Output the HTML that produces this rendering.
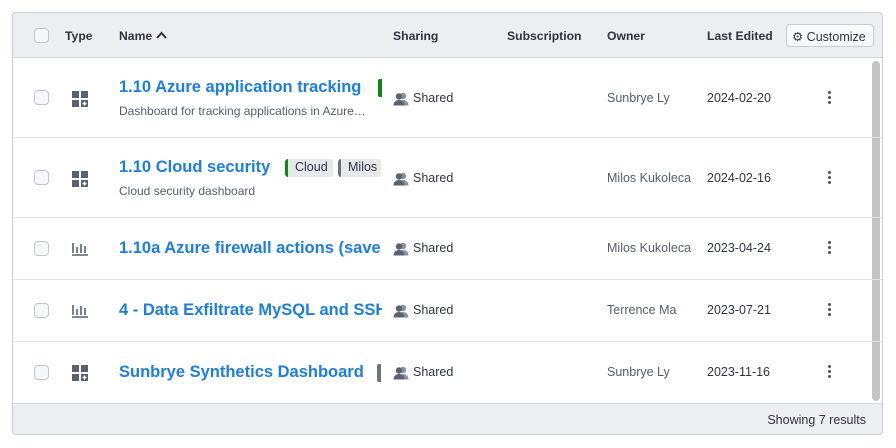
<!DOCTYPE html>
<html><head><style>
*{box-sizing:border-box;margin:0;padding:0}
body{width:896px;height:448px;background:#fff;font-family:"Liberation Sans",sans-serif;position:relative;overflow:hidden}
.box{position:absolute;left:12px;top:12px;width:871px;height:423px;border:1px solid #c9ccd1;border-radius:4px;overflow:hidden}
.hdr{position:absolute;left:0;top:0;width:100%;height:45px;background:#eceef2;border-bottom:1px solid #d3d6db}
.ftr{position:absolute;left:0;top:390px;width:100%;height:33px;background:#eceef2;border-top:1px solid #d3d6db}
.a{position:absolute;white-space:nowrap}
.h{font-size:12.2px;font-weight:bold;color:#2e3440;top:16px}
.cb{position:absolute;width:15px;height:15px;border:1px solid #c2c6cc;border-radius:4px;background:#f5f7fa;left:21px}
.row{position:absolute;left:0;width:100%;border-bottom:1px solid #e1e3e6}
.nm{font-size:16.5px;font-weight:bold;color:#1a7ee6;overflow:hidden;max-width:263px}
.ds{font-size:12px;color:#545d6b}
.sh{font-size:12.5px;color:#2e3440}
.ow{font-size:12.5px;color:#545d6b}
.dt{font-size:12.5px;color:#2e3440}
.tag{position:absolute;height:18px;background:#e6e8eb;border-radius:3px;font-size:12.5px;color:#2e3440;padding:1px 5px 0 7px;border-left:3px solid #0a8a0a;white-space:nowrap;overflow:hidden}
.dots{position:absolute;left:815px;width:4px}
.dots i{display:block;width:3px;height:3px;border-radius:50%;background:#4a5260;margin-bottom:2px}
</style></head><body>
<svg width="0" height="0" style="position:absolute"><defs><symbol id="u" viewBox="0 0 16 14"><circle cx="10" cy="4" r="3.2" fill="#8a929e"/><path d="M4.5 13.5c0-3.5 2.5-5.5 5.5-5.5s5.5 2 5.5 5.5z" fill="#8a929e"/><circle cx="6" cy="4.5" r="3.2" fill="#596270"/><path d="M0.5 13.5c0-3.5 2.5-5.5 5.5-5.5s5.5 2 5.5 5.5z" fill="#596270"/></symbol></defs></svg>
<div class="box">
<div class="hdr">
<div class="cb" style="top:15px"></div>
<div class="a h" style="left:52px">Type</div>
<div class="a h" style="left:106px">Name <svg width="11" height="8" viewBox="0 0 11 8" style="vertical-align:1px"><path d="M1 7L5.5 2L10 7" fill="none" stroke="#2e3440" stroke-width="2"/></svg></div>
<div class="a h" style="left:380px">Sharing</div>
<div class="a h" style="left:494px">Subscription</div>
<div class="a h" style="left:594px">Owner</div>
<div class="a h" style="left:694px">Last Edited</div>
<div class="a" style="left:773px;top:11px;width:88px;height:23px;border:1px solid #c9ccd1;border-radius:4px;background:#f8f9fa;font-size:12.5px;color:#2e3440;padding:4px 0 0 5px">⚙ Customize</div>
</div>
<div class="a" style="left:859px;top:48px;width:8px;height:340px;border-radius:4px;background:#c4c4c4"></div>

<div class="row" style="top:45px;height:80px">
<div class="cb" style="top:32px"></div>
<svg class="a" style="left:59px;top:33px" width="17" height="17" viewBox="0 0 17 17"><rect x="0" y="0" width="7" height="7" fill="#596270"/><rect x="9" y="0" width="7" height="7" fill="#596270"/><rect x="0" y="9" width="7" height="7" fill="#596270"/><path d="M9 9h7v7h-7z" fill="#596270"/><path d="M12.5 10.5v4M10.5 12.5h4" stroke="#fff" stroke-width="1.4"/></svg>
<div class="a nm" style="left:106px;top:20px">1.10 Azure application tracking</div>
<div class="a" style="left:365px;top:21px;width:4px;height:18px;background:#0a8a0a;border-radius:2px 0 0 2px"></div>
<div class="a ds" style="left:106px;top:46px">Dashboard for tracking applications in Azure…</div>
<svg class="a" style="left:380px;top:34px" width="16" height="14"><use href="#u"/></svg>
<div class="a sh" style="left:400px;top:33px">Shared</div>
<div class="a ow" style="left:594px;top:33px">Sunbrye Ly</div>
<div class="a dt" style="left:694px;top:33px">2024-02-20</div>
<div class="dots" style="top:33px"><i></i><i></i><i></i></div>
</div>
<div class="row" style="top:125px;height:80px">
<div class="cb" style="top:32px"></div>
<svg class="a" style="left:59px;top:33px" width="17" height="17" viewBox="0 0 17 17"><rect x="0" y="0" width="7" height="7" fill="#596270"/><rect x="9" y="0" width="7" height="7" fill="#596270"/><rect x="0" y="9" width="7" height="7" fill="#596270"/><path d="M9 9h7v7h-7z" fill="#596270"/><path d="M12.5 10.5v4M10.5 12.5h4" stroke="#fff" stroke-width="1.4"/></svg>
<div class="a nm" style="left:106px;top:20px">1.10 Cloud security</div>
<div class="tag" style="left:272px;top:21px">Cloud</div>
<div class="tag" style="left:325px;top:21px;border-left-color:#6b7380;width:43px">Milos K</div>
<div class="a ds" style="left:106px;top:46px">Cloud security dashboard</div>
<svg class="a" style="left:380px;top:34px" width="16" height="14"><use href="#u"/></svg>
<div class="a sh" style="left:400px;top:33px">Shared</div>
<div class="a ow" style="left:594px;top:33px">Milos Kukoleca</div>
<div class="a dt" style="left:694px;top:33px">2024-02-16</div>
<div class="dots" style="top:33px"><i></i><i></i><i></i></div>
</div>
<div class="row" style="top:205px;height:62px">
<div class="cb" style="top:23px"></div>
<svg class="a" style="left:59px;top:23px" width="17" height="15" viewBox="0 0 17 15"><path d="M1 2v10M5 6v6M9 3v9M13 5v7M0 14h16" stroke="#596270" stroke-width="1.6"/></svg>
<div class="a nm" style="left:106px;top:21px">1.10a Azure firewall actions (save</div>
<svg class="a" style="left:380px;top:24px" width="16" height="14"><use href="#u"/></svg>
<div class="a sh" style="left:400px;top:23px">Shared</div>
<div class="a ow" style="left:594px;top:23px">Milos Kukoleca</div>
<div class="a dt" style="left:694px;top:23px">2023-04-24</div>
<div class="dots" style="top:23px"><i></i><i></i><i></i></div>
</div>
<div class="row" style="top:267px;height:62px">
<div class="cb" style="top:23px"></div>
<svg class="a" style="left:59px;top:23px" width="17" height="15" viewBox="0 0 17 15"><path d="M1 2v10M5 6v6M9 3v9M13 5v7M0 14h16" stroke="#596270" stroke-width="1.6"/></svg>
<div class="a nm" style="left:106px;top:21px">4 - Data Exfiltrate MySQL and SSH</div>
<svg class="a" style="left:380px;top:24px" width="16" height="14"><use href="#u"/></svg>
<div class="a sh" style="left:400px;top:23px">Shared</div>
<div class="a ow" style="left:594px;top:23px">Terrence Ma</div>
<div class="a dt" style="left:694px;top:23px">2023-07-21</div>
<div class="dots" style="top:23px"><i></i><i></i><i></i></div>
</div>
<div class="row" style="top:329px;height:62px;border-bottom:none">
<div class="cb" style="top:23px"></div>
<svg class="a" style="left:59px;top:23px" width="17" height="17" viewBox="0 0 17 17"><rect x="0" y="0" width="7" height="7" fill="#596270"/><rect x="9" y="0" width="7" height="7" fill="#596270"/><rect x="0" y="9" width="7" height="7" fill="#596270"/><path d="M9 9h7v7h-7z" fill="#596270"/><path d="M12.5 10.5v4M10.5 12.5h4" stroke="#fff" stroke-width="1.4"/></svg>
<div class="a nm" style="left:106px;top:21px">Sunbrye Synthetics Dashboard</div>
<div class="a" style="left:364px;top:22px;width:4px;height:18px;background:#6b7380;border-radius:2px 0 0 2px"></div>
<svg class="a" style="left:380px;top:24px" width="16" height="14"><use href="#u"/></svg>
<div class="a sh" style="left:400px;top:23px">Shared</div>
<div class="a ow" style="left:594px;top:23px">Sunbrye Ly</div>
<div class="a dt" style="left:694px;top:23px">2023-11-16</div>
<div class="dots" style="top:23px"><i></i><i></i><i></i></div>
</div>
<div class="ftr"><div class="a" style="right:16px;top:9px;font-size:12.5px;color:#2e3440">Showing 7 results</div></div>
</div>
</body></html>
